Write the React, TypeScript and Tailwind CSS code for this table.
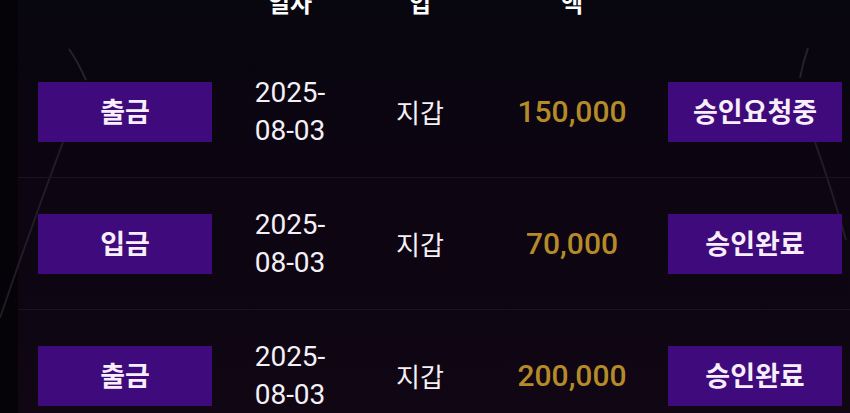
const rows = [
  { type: "출금", date: ["2025-", "08-03"], wallet: "지갑", amount: "150,000", status: "승인요청중" },
  { type: "입금", date: ["2025-", "08-03"], wallet: "지갑", amount: "70,000", status: "승인완료" },
  { type: "출금", date: ["2025-", "08-03"], wallet: "지갑", amount: "200,000", status: "승인완료" },
];

const font = "font-['Roboto','Noto_Sans_CJK_KR',sans-serif]";

const Badge = ({ label }: { label: string }) => (
  <div className="w-[174px] h-[60px] bg-[#3f0a7c] flex items-center justify-center text-[27px] font-bold text-[#f8eefa] font-['Noto_Sans_CJK_KR',sans-serif]">
    {label}
  </div>
);

const App = () => {
  return (
    <div className={`relative w-[850px] h-[413px] overflow-hidden bg-[#0b0510] text-white ${font}`}>
      {/* background */}
      <div className="absolute inset-0 bg-gradient-to-b from-[#08060f] via-[#0d0512] to-[#100614]"></div>
      <div className="absolute left-0 top-0 bottom-0 w-[18px] bg-[#050307]"></div>

      {/* decorative light streaks */}
      <svg className="absolute inset-0 pointer-events-none" width="850" height="413" viewBox="0 0 850 413">
        <path d="M69 49 Q78 62 86 80" stroke="#3b3345" strokeWidth="2" fill="none" opacity="0.6" />
        <path d="M63 142 Q30 230 0 318" stroke="#2c2632" strokeWidth="2" fill="none" opacity="0.7" />
        <path d="M808 48 Q803 62 800 78" stroke="#3b3345" strokeWidth="2" fill="none" opacity="0.6" />
        <path d="M815 142 Q832 190 846 240" stroke="#2c2632" strokeWidth="2" fill="none" opacity="0.7" />
      </svg>

      <div className="relative">
        {/* header, its top is scrolled out of view */}
        <div className="h-[46px] overflow-hidden">
          <div className="flex h-[60px] -mt-[43px] pl-[18px] text-[24px] font-bold leading-[30px] font-['Noto_Sans_CJK_KR',sans-serif]">
            <div className="w-[214px]"></div>
            <div className="w-[116px] flex items-center justify-center text-center">거래<br />일자</div>
            <div className="w-[144px] flex items-center justify-center text-center">타<br />입</div>
            <div className="w-[160px] flex items-center justify-center text-center">금<br />액</div>
            <div className="flex-1"></div>
          </div>
        </div>

        {rows.map((r, i) => (
          <div key={i} className="ml-[18px] h-[132px] flex items-center border-b border-[#1c1320]">
            <div className="w-[214px] flex justify-center">
              <Badge label={r.type} />
            </div>
            <div className="w-[116px] flex justify-center">
              <div className="text-[28px] leading-[38px] text-[#f4f0f6]">
                {r.date[0]}
                <br />
                {r.date[1]}
              </div>
            </div>
            <div className="w-[144px] flex justify-center text-[26px] text-[#f4f0f6] font-['Noto_Sans_CJK_KR',sans-serif]">
              {r.wallet}
            </div>
            <div className="w-[160px] flex justify-center text-[30px] font-medium text-[#b58b2a]">
              {r.amount}
            </div>
            <div className="flex-1 flex justify-end pr-[8px]">
              <Badge label={r.status} />
            </div>
          </div>
        ))}
      </div>
    </div>
  );
};

export default App;
